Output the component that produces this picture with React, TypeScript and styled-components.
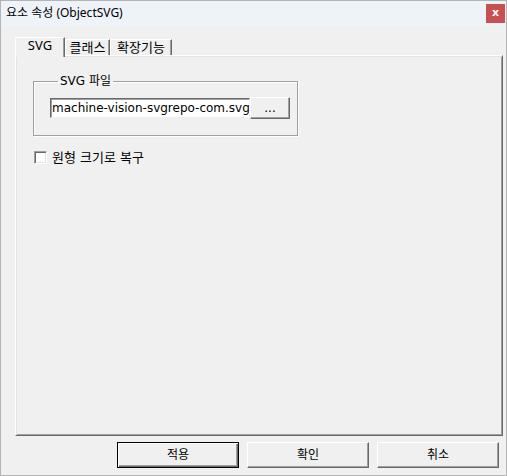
import React from "react";
import styled, { createGlobalStyle } from "styled-components";

const Global = createGlobalStyle`
  html, body { margin: 0; padding: 0; background: #f0f0f0; }
  body { font-family: "DejaVu Sans", "Noto Sans CJK KR", sans-serif; }
  * { box-sizing: border-box; }
`;

const Window = styled.div`
  width: 507px;
  height: 476px;
  border: 1px solid #b4b4b4;
  background: #f0f0f0;
  display: flex;
  flex-direction: column;
`;

const TitleBar = styled.div`
  height: 25px;
  flex: none;
  background: #eef3f9;
  display: flex;
  align-items: center;
  justify-content: space-between;
  padding-left: 5px;
  padding-right: 1px;
`;

const Title = styled.span`
  font-family: "Noto Sans", "Noto Sans CJK KR", sans-serif;
  font-size: 12px;
  color: #000;
  line-height: 16px;
  padding-bottom: 1px;
`;

const CloseButton = styled.div`
  width: 19px;
  height: 19px;
  background: #c75050;
  color: #fff;
  display: flex;
  align-items: center;
  justify-content: center;
  font-family: "DejaVu Sans", sans-serif;
  font-weight: bold;
  font-size: 11px;
  line-height: 1;
  padding-bottom: 2px;
`;

const TabStrip = styled.div`
  margin-top: 11px;
  margin-left: 14px;
  height: 18px;
  flex: none;
  display: flex;
  align-items: flex-end;
`;

const Tab = styled.div<{ $active?: boolean; $w: number }>`
  position: relative;
  z-index: ${(p) => (p.$active ? 2 : 1)};
  width: ${(p) => p.$w}px;
  height: ${(p) => (p.$active ? 20 : 16)}px;
  margin-bottom: ${(p) => (p.$active ? -2 : 0)}px;
  background: #f0f0f0;
  border-left: 1px solid #fff;
  border-top: 1px solid #fff;
  border-right: 1px solid #696969;
  box-shadow: inset -1px 0 0 #a0a0a0;
  display: flex;
  justify-content: center;
  align-items: ${(p) => (p.$active ? "flex-start" : "center")};
  padding-top: ${(p) => (p.$active ? 0 : 0)}px;
  font-family: "Noto Sans", "Noto Sans CJK KR", sans-serif;
  font-size: 13px;
  line-height: 15px;
  color: #000;
`;

const Panel = styled.div`
  flex: 1;
  margin-left: 14px;
  margin-right: 3px;
  border-top: 1px solid #fff;
  border-left: 1px solid #fff;
  border-right: 1px solid #696969;
  border-bottom: 1px solid #696969;
  box-shadow: inset 1px 1px 0 #e3e3e3, inset -1px -1px 0 #a0a0a0;
  padding: 18px 16px 0 17px;
  display: flex;
  flex-direction: column;
  align-items: flex-start;
`;

const Group = styled.fieldset`
  margin: 0;
  width: 265px;
  border: 1px solid #a0a0a0;
  box-shadow: inset 1px 1px 0 #fff, 1px 1px 0 #fff;
  padding: 9px 7px 16px 16px;
  display: flex;
  align-items: center;
`;

const Legend = styled.legend`
  margin-left: 8px;
  padding: 0 2px;
  font-size: 12px;
  line-height: 14px;
  color: #000;
`;

const PathInput = styled.div`
  width: 200px;
  height: 20px;
  background: #fff;
  border-top: 1px solid #696969;
  border-left: 1px solid #696969;
  border-right: 1px solid #f0f0f0;
  border-bottom: 1px solid #f0f0f0;
  box-shadow: inset 1px 1px 0 #a0a0a0;
  padding: 0 1px 0 1px;
  font-size: 12px;
  line-height: 18px;
  color: #000;
  white-space: nowrap;
  overflow: hidden;
`;

const RaisedButton = styled.div<{ $w: number; $h: number; $default?: boolean }>`
  width: ${(p) => p.$w}px;
  height: ${(p) => p.$h}px;
  flex: none;
  background: #f0f0f0;
  border-top: 1px solid ${(p) => (p.$default ? "#000" : "#fff")};
  border-left: 1px solid ${(p) => (p.$default ? "#000" : "#fff")};
  border-right: 1px solid ${(p) => (p.$default ? "#000" : "#696969")};
  border-bottom: 1px solid ${(p) => (p.$default ? "#000" : "#696969")};
  box-shadow: ${(p) =>
    p.$default
      ? "inset 1px 1px 0 #fff, inset -1px -1px 0 #696969, inset -2px -2px 0 #a0a0a0"
      : "inset -1px -1px 0 #a0a0a0"};
  display: flex;
  align-items: center;
  justify-content: center;
  font-size: 12px;
  line-height: 14px;
  color: #000;
`;

const CheckRow = styled.div`
  margin-top: 14px;
  margin-left: 1px;
  display: flex;
  align-items: center;
  gap: 5px;
`;

const CheckBox = styled.div`
  width: 13px;
  height: 13px;
  background: #fff;
  border-top: 1px solid #a0a0a0;
  border-left: 1px solid #a0a0a0;
  border-right: 1px solid #fff;
  border-bottom: 1px solid #fff;
  box-shadow: inset 1px 1px 0 #696969, inset -1px -1px 0 #e3e3e3;
`;

const Label = styled.span`
  font-size: 13px;
  line-height: 15px;
  color: #000;
`;

const ButtonRow = styled.div`
  flex: none;
  margin-top: 6px;
  margin-bottom: 7px;
  margin-right: 7px;
  display: flex;
  justify-content: flex-end;
  gap: 8px;
`;

export default function App() {
  return (
    <>
      <Global />
      <Window>
        <TitleBar>
          <Title>요소 속성 (ObjectSVG)</Title>
          <CloseButton>x</CloseButton>
        </TitleBar>
        <TabStrip>
          <Tab $active $w={50}>SVG</Tab>
          <Tab $w={45}>클래스</Tab>
          <Tab $w={62}>확장기능</Tab>
        </TabStrip>
        <Panel>
          <Group>
            <Legend>SVG 파일</Legend>
            <PathInput>machine-vision-svgrepo-com.svg</PathInput>
            <RaisedButton $w={40} $h={22}>...</RaisedButton>
          </Group>
          <CheckRow>
            <CheckBox />
            <Label>원형 크기로 복구</Label>
          </CheckRow>
        </Panel>
        <ButtonRow>
          <RaisedButton $w={122} $h={26} $default>적용</RaisedButton>
          <RaisedButton $w={122} $h={26}>확인</RaisedButton>
          <RaisedButton $w={122} $h={26}>취소</RaisedButton>
        </ButtonRow>
      </Window>
    </>
  );
}
